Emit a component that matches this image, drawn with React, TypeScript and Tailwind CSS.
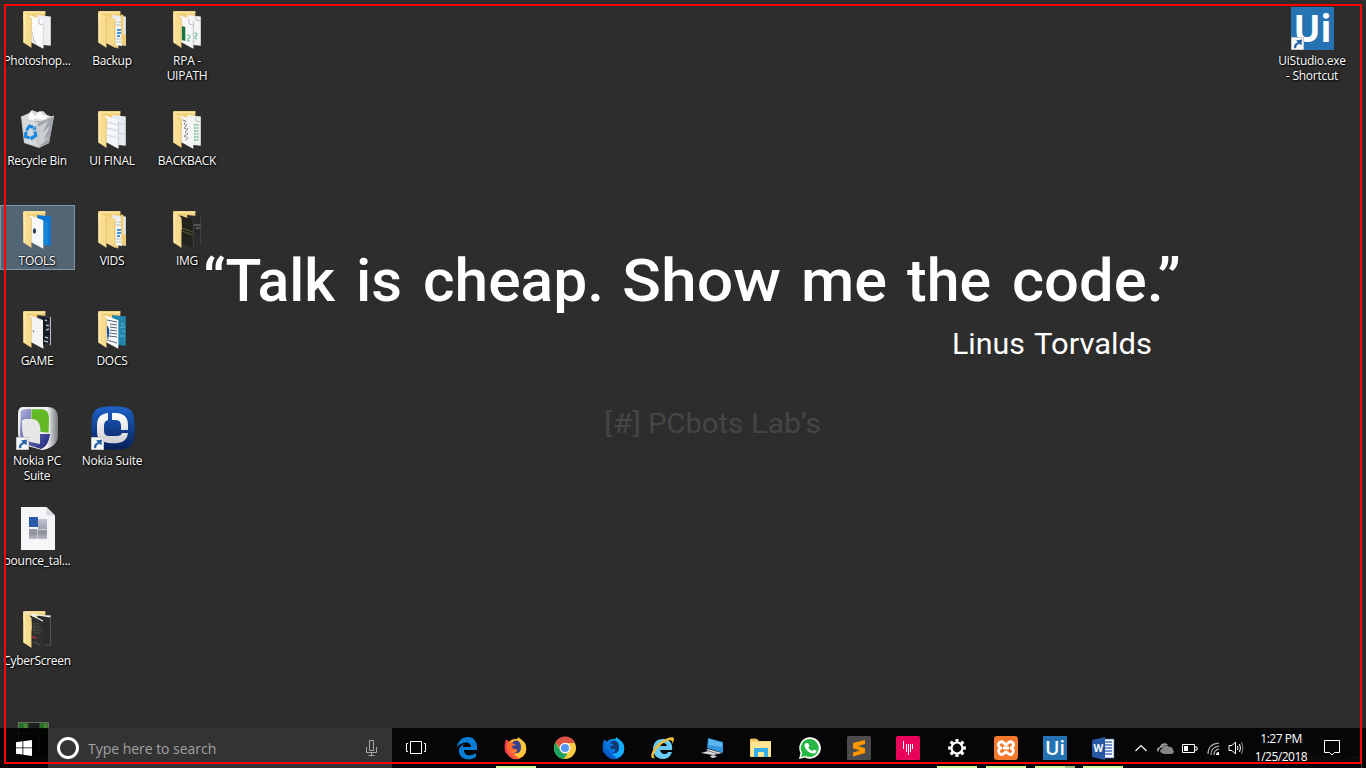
import React from "react";

type FolderKind = "plain" | "stack" | "sheets" | "forms" | "list" | "tools" | "dark" | "game" | "docs" | "cyber";

const sheetColors: Record<FolderKind, [string, string]> = {
  plain: ["#fafafa", "#eceef1"],
  stack: ["#f2d27d", "#e9edf2"],
  sheets: ["#f8f8f8", "#f1f3f2"],
  forms: ["#f4f6f9", "#e6ebf2"],
  list: ["#f5f5f3", "#eff3f0"],
  tools: ["#f6f8fa", "#0a78d2"],
  dark: ["#22231e", "#292a2c"],
  game: ["#f3f4f3", "#343842"],
  docs: ["#fafafa", "#2386ac"],
  cyber: ["#303030", "#2b2b2b"],
};

function FolderDetail({ kind }: { kind: FolderKind }) {
  switch (kind) {
    case "plain":
      return (
        <g fill="none" strokeWidth=".6">
          <path d="M17 9v5l4 1M10 22l2 9M11 29l3 5" stroke="#9aa0a6" />
          <path d="M21.3 11v27" stroke="#c4c7cb" />
        </g>
      );
    case "stack":
      return (
        <g>
          <path d="M18 8l7 1v27l-7-1z" fill="#f4f6f8" />
          <path d="M19 12h5M19 15h5M19 29h5M19 32h5" stroke="#a5b0bd" strokeWidth=".8" />
          <path d="M20 20h4M20 23h4M20 26h3" stroke="#3d93dd" strokeWidth="2" />
          <path d="M9 6l9.5 3v29L9 33z" fill="#f6d98b" />
          <path d="M17.8 9v28.5" stroke="#dcb964" strokeWidth=".6" />
          <path d="M23.5 4l3 1.3v19l2.3 1v10.5l-4.3-1z" fill="#efcd75" />
        </g>
      );
    case "sheets":
      return (
        <g>
          <path d="M9.8 16l3.5 1v14l-3.5-1z" fill="#137641" />
          <path d="M15 25c3 0 4 1 2 3s-2 3 1 3M22 23c3 0 4 1 2 3s-1 3 1 3" stroke="#76c29b" strokeWidth="1.2" fill="none" />
          <path d="M17 9v5l4 1M24 6v4l5 1M21.3 11v27" stroke="#aaa" strokeWidth=".7" fill="none" />
        </g>
      );
    case "forms":
      return <path d="M10 12l11 3M10 18l11 3M10 25l11 3M21 13l8 2M21 23l8 2M21.3 11v27" stroke="#c0c9d4" strokeWidth=".8" />;
    case "list":
      return (
        <g fill="none">
          <path d="M11 10l3 1-2 3 3 1-3 3 4 1-3 3 3 2-4 2 4 2-3 3" stroke="#686c6c" strokeWidth="1" strokeDasharray="2 .8" />
          <path d="M22 15h5M22 18h5M22 21h5M22 24h5M22 27h5M22 30h5" stroke="#7ec49a" strokeWidth="1.7" strokeDasharray="2 .5" />
          <path d="M24 7v4l5 1" stroke="#aaa" strokeWidth=".6" />
        </g>
      );
    case "tools":
      return (
        <g>
          <ellipse cx="12.5" cy="21" rx="1.6" ry="2.7" fill="#293e59" />
          <path d="M23 10l3 3v22h-5z" fill="#42a8e9" opacity=".25" />
        </g>
      );
    case "dark":
      return (
        <g fill="none">
          <path d="M10 18l11 4M10 21l11 4" stroke="#777135" strokeWidth=".7" />
          <path d="M22 15h7M24 18h4" stroke="#b0b0b0" strokeWidth=".9" strokeDasharray="1.5 .6" />
          <path d="M21.3 10v28M28.5 7v28" stroke="#51524d" strokeWidth=".6" />
        </g>
      );
    case "game":
      return (
        <g>
          <path d="M17 6l6 1 5 2-2 5 3 4-2 4 2 4-3 2 2 5-7 2V9z" fill="#171c25" />
          <path d="M23 10l2 1M24 15l3 1M23 27l3 1M24 20l3-1M22 31l4 1" stroke="#aebac5" strokeWidth="1.4" fill="none" />
          <path d="M28.5 7v28" stroke="#e4e6e8" strokeWidth=".8" />
          <path d="M10.5 20l2 1-1 2z" fill="#6d896f" />
        </g>
      );
    case "docs":
      return (
        <g fill="none">
          <path d="M10 10l10 2M13 14l7 1M13 17l7 1M13 20l7 1M13 23l7 1M12 26l8 1M10 30l10 3" stroke="#516178" strokeWidth="1" />
          <path d="M9.5 15c3 2 4 9 1 15z" fill="#174d9a" />
          <path d="M24 14h3M23 17h5M25 21h3M23 26h5" stroke="#87cde0" strokeWidth=".7" />
        </g>
      );
    case "cyber":
      return (
        <g fill="none">
          <path d="M3 2l18 9M10 5l19 1M10 4l18 3" stroke="#edf1ec" strokeWidth="1.1" />
          <path d="M11 14h6M11 17h7M11 20h9M12 23h6" stroke="#55624e" strokeWidth=".8" strokeDasharray="3 .6" />
          <path d="M10 27l5 1" stroke="#d7333c" strokeWidth="1.2" />
          <path d="M12 32l6 3M28.5 7v28h-6" stroke="#69706b" strokeWidth=".6" />
        </g>
      );
  }
}

function Folder({ kind }: { kind: FolderKind }) {
  const [front, back] = sheetColors[kind];
  return (
    <svg className="mr-[1.5px]" width="30" height="40" viewBox="0 0 30 40">
      <path d="M1.3 1.3h22v10h-22z" fill="#f0cf78" />
      <path d="M1.3 1.3h22v2H4z" fill="#ffe6a0" />
      <path d="M15 5l13.8 1.4v29.3l-9.8-1z" fill={back} />
      <path d="M7.8 5.2l13.5 5.1v28.4l-12.5-6.6z" fill={front} />
      <FolderDetail kind={kind} />
      <path d="M1.3 1.4l7.9 6.2c.2 4 1.2 8 .5 12-.8 2-.4 6-.4 18.2l-8-5.4z" fill="#f8dc90" />
      <path d="M1.6 2v30.5l1.7 1V3.5z" fill="#ffe9ac" />
      <path d="M9.2 8v29.5" stroke="#d9b45d" strokeWidth=".6" fill="none" />
    </svg>
  );
}

function Shortcut({ children }: { children: React.ReactNode }) {
  return (
    <div className="relative">
      {children}
      <svg className="absolute bottom-0 left-0" width="13" height="13" viewBox="0 0 13 13">
        <path d="M.5.5h12v12H.5z" fill="#f6f7f8" stroke="#c5c9cc" />
        <path d="M3 11.2C2.8 7.8 4 6 6.7 5.4L5 3.5l6-1-.6 6-2-1.8C6.5 7.3 5 8.5 5.2 11z" fill="#2864a4" />
      </svg>
    </div>
  );
}

function RecycleBin() {
  return (
    <svg className="mr-[2px]" width="36" height="41" viewBox="0 0 36 41">
      <path d="M1.5 8L10 4l3-3 5 2 6-1 4 4 6 2-3 4H6z" fill="#d4d8da" />
      <path d="M9 8l3-6 4 5 5-5 3 4 5 1-4 4-8-1-5 2z" fill="#fbfbfb" />
      <path d="M2 8l17 5 16-6-5 27-10 5-15-5z" fill="#c9cdd1" />
      <path d="M19 13l16-6-5 27-10 5z" fill="#9fa5aa" />
      <path d="M3 10l15 4-5 9 5 14-12-4zM19 18l10-6-5 11 7-6-6 13 5-2-10 10z" fill="#dde0e2" opacity=".7" />
      <path d="M2 8l17 5 16-6" fill="none" stroke="#eceeef" strokeWidth=".7" />
      <g fill="none" stroke="#1687dd" strokeWidth="3">
        <path d="M7.5 21.5l3-4.5 4 1.5" />
        <path d="M16 22.5l.8 4-4 2.8" />
        <path d="M10.5 29l-4-1.5.3-3.5" />
      </g>
      <path d="M13.5 21.5l3.7-1-.5-4zM13.5 32l-3-3 3-3zM4.5 24.5l2.5-2.5 2.5 2.5z" fill="#1687dd" />
    </svg>
  );
}

function NokiaPc() {
  return (
    <svg width="43" height="44" viewBox="0 0 43 44">
      <defs>
        <linearGradient id="silverEdge"><stop stopColor="#eeeeef" /><stop offset=".72" stopColor="#f4f4f5" /><stop offset="1" stopColor="#777b7f" /></linearGradient>
        <linearGradient id="violetFace" x2="1" y2="1"><stop stopColor="#aeb1dc" /><stop offset=".5" stopColor="#6264ac" /><stop offset="1" stopColor="#1d267b" /></linearGradient>
      </defs>
      <path d="M7 1h24c8 0 11 4 11 12v17c0 8-8 13-16 14L8 39C3 36 2 31 2 25V9c0-5 1-8 5-8z" fill="url(#silverEdge)" />
      <path d="M7 3h20c5 0 7 4 7 10v16c0 8-2 12-8 14L9 38c-4-3-5-7-5-13V9c0-4 1-6 3-6z" fill="#e8e9ed" />
      <path d="M5 5c3-2 6-2 10-2v10H9c-4 3-3 18 1 22l14 3v-10h10c-1 8-4 13-9 15L9 38C5 35 4 31 4 25z" fill="url(#violetFace)" />
      <path d="M15.5 3.3H26c6 1 7 5 7 10.5l-.4 13-8.2-1c.2-8-2.2-11-8.9-11z" fill="#63ba24" />
      <path d="M6 14l9-1c7 0 9 4 9 12v12l-11-2c-6-2-7-8-7-21z" fill="#e8e7e7" />
    </svg>
  );
}

function NokiaSuite() {
  return (
    <svg width="44" height="44" viewBox="0 0 44 44">
      <defs>
        <linearGradient id="suiteBlue" x2="0" y2="1"><stop stopColor="#1c62c7" /><stop offset=".55" stopColor="#123c8b" /><stop offset="1" stopColor="#081f58" /></linearGradient>
        <linearGradient id="suiteWhite" x2="0" y2="1"><stop stopColor="#fff" /><stop offset="1" stopColor="#cfcfd3" /></linearGradient>
      </defs>
      <path d="M12 1c6-1 14-1 20 0 7 1 10 4 11 11s1 14 0 21c-1 6-4 9-10 10-7 1-14 1-21 0C5 42 2 39 1 33c-1-7-1-14 0-21C2 5 5 2 12 1z" fill="url(#suiteBlue)" />
      <path d="M17 7v7q-4 1-4 6v5q0 5 5 5h8q4 0 5-3h6q-1 9-10 10-8 1-14-1Q6 34 6 26v-7Q6 8 17 7zM21 7h5q11 1 11 12v5h-7v-4q0-6-5-6h-4z" fill="url(#suiteWhite)" />
    </svg>
  );
}

function BounceFile() {
  return (
    <svg width="34" height="43" viewBox="0 0 34 43">
      <defs><linearGradient id="tileGray" x2="0" y2="1"><stop stopColor="#c2c4d2" /><stop offset=".7" stopColor="#8d8e9b" /><stop offset="1" stopColor="#bcbccb" /></linearGradient></defs>
      <path d="M0 0h25.5L34 8.5V43H0z" fill="#f6f6f9" />
      <path d="M25.5 0v8.5H34z" fill="#d8d8e1" />
      <path d="M8 10h9v10H8z" fill="#2a5aa8" />
      <path d="M17 12h9v10h-9zM8 22h8.5v10H8zM17 22.5h9V32h-9z" fill="url(#tileGray)" />
    </svg>
  );
}

function PixelThumbnail() {
  return (
    <svg width="32" height="35" viewBox="0 0 32 35">
      <path d="M0 0h31v35H0z" fill="#111c10" />
      <path d="M1 1h9v6H1zM22 1h8v6h-8z" fill="#287028" />
      <path d="M11 1h10v6H11z" fill="#1d201e" />
      <path d="M0 .5h31M.5 0v35M30.5 0v35" stroke="#666e67" />
      <path d="M10.5 1v33M21.5 1v33M1 11h29M1 22h29" stroke="#313c31" />
      <path d="M6 2h3v4H6zM26 2h3v4h-3z" fill="#568234" />
    </svg>
  );
}

function UiTile({ large = false }: { large?: boolean }) {
  return large ? (
    <svg className="overflow-visible" width="43" height="43" viewBox="0 0 43 43">
      <path d="M0 0h43v43H0z" fill="#2573b3" />
      <text x="2.4" y="34.5" fontFamily="Open Sans, sans-serif" fontSize="37" fontWeight="700" fill="white" textLength="38" lengthAdjust="spacingAndGlyphs">Ui</text>
    </svg>
  ) : (
    <svg className="overflow-visible" width="24" height="24" viewBox="0 0 24 24">
      <path d="M0 0h24v24H0z" fill="#2573b3" />
      <text x="2" y="19" fontFamily="Open Sans, sans-serif" fontSize="20" fontWeight="600" fill="white" textLength="20" lengthAdjust="spacingAndGlyphs">Ui</text>
    </svg>
  );
}

function DesktopItem({ icon, label, selected }: { icon?: React.ReactNode; label?: React.ReactNode; selected?: boolean }) {
  return (
    <div className="h-[100px] w-[75px] shrink-0">
      <div className={"flex h-[65px] w-[75px] flex-col items-center " + (selected ? "bg-[#536475] outline-1 -outline-offset-1 outline-[#8195a7]" : "")}>
        <div className="flex h-[48px] shrink-0 items-end justify-center pb-[3px]">{icon}</div>
        <div className="mr-px text-center font-['Open_Sans',sans-serif] text-[12px] leading-[15px] tracking-[-0.27px] whitespace-nowrap text-white [text-shadow:1px_1px_2px_#000,0_0_2px_#000]">{label}</div>
      </div>
    </div>
  );
}

const columns: { icon: React.ReactNode; label: React.ReactNode; selected?: boolean }[][] = [
  [
    { icon: <Folder kind="plain" />, label: "Photoshop..." },
    { icon: <RecycleBin />, label: "Recycle Bin" },
    { icon: <Folder kind="tools" />, label: "TOOLS", selected: true },
    { icon: <Folder kind="game" />, label: "GAME" },
    { icon: <Shortcut><NokiaPc /></Shortcut>, label: <>Nokia PC<br />Suite</> },
    { icon: <BounceFile />, label: "bounce_tal..." },
    { icon: <Folder kind="cyber" />, label: "CyberScreen" },
  ],
  [
    { icon: <Folder kind="stack" />, label: "Backup" },
    { icon: <Folder kind="forms" />, label: "UI FINAL" },
    { icon: <Folder kind="stack" />, label: "VIDS" },
    { icon: <Folder kind="docs" />, label: "DOCS" },
    { icon: <Shortcut><NokiaSuite /></Shortcut>, label: "Nokia Suite" },
  ],
  [
    { icon: <Folder kind="sheets" />, label: <>RPA -<br />UIPATH</> },
    { icon: <Folder kind="list" />, label: "BACKBACK" },
    { icon: <Folder kind="dark" />, label: "IMG" },
  ],
];

type Word = [string, number, number];
const quoteWords: Word[] = [["“Talk", 203, 132], ["is", 356, 46], ["cheap.", 423, 181], ["Show", 622, 159], ["me", 801, 86], ["the", 907, 84], ["code.”", 1012, 169]];
const authorWords: Word[] = [["Linus", 952, 73], ["Torvalds", 1034, 118]];
const labWords: Word[] = [["[#]", 604, 37], ["PCbots", 648, 95], ["Lab’s", 751, 70]];

function Wallpaper() {
  return (
    <svg className="absolute inset-0" width="1366" height="768" viewBox="0 0 1366 768" fontFamily="Roboto, sans-serif">
      <g fill="white" fontSize="60" fontWeight="500">
        {quoteWords.map(([t, x, w]) => <text key={t} x={x} y="301" textLength={w} lengthAdjust="spacingAndGlyphs">{t}</text>)}
      </g>
      <g fill="white" fontSize="29" fontWeight="400">
        {authorWords.map(([t, x, w]) => <text key={t} x={x} y="354" textLength={w} lengthAdjust="spacingAndGlyphs">{t}</text>)}
      </g>
      <g fill="#454545" fontSize="28" fontWeight="400">
        {labWords.map(([t, x, w]) => <text key={t} x={x} y="433" textLength={w} lengthAdjust="spacingAndGlyphs">{t}</text>)}
      </g>
    </svg>
  );
}

const Edge = () => (
  <svg width="22" height="24" viewBox="0 0 22 24"><path d="M1 11C2 5 6 1 12 1c6 0 9 5 9 10v3H8c0 7 8 6 12 3v4c-6 4-16 3-17-5-.5-4 2-7 6-8-3 2-2 3-2 3h8c0-6-9-6-14 0z" fill="#087ed7" /></svg>
);

function Firefox({ developer = false }: { developer?: boolean }) {
  const id = developer ? "foxBlue" : "foxRed";
  return (
    <svg width="24" height="24" viewBox="0 0 24 24">
      <defs>
        <linearGradient id={id} x1="1" y1="0" x2="0" y2="1"><stop stopColor={developer ? "#23d1fb" : "#fff153"} /><stop offset=".5" stopColor={developer ? "#0878ed" : "#ff9624"} /><stop offset="1" stopColor={developer ? "#0d42a7" : "#f51b5f"} /></linearGradient>
      </defs>
      <circle cx="12" cy="13" r="10.3" fill={`url(#${id})`} />
      <path d="M14 1l4 3 3 3c3 7 0 13-6 15l-5-4c6 0 7-4 5-8-2-3-2-6-1-9z" fill={developer ? "#15aeff" : "#ffc83c"} />
      <path d="M1 11L3 4l3 3 6-1-3 4 6-1-2 6-6-1z" fill={developer ? "#0878df" : "#ff6a2f"} />
      <path d="M8 7c4-5 9-2 9 4s-3 7-7 5c4 0 4-2 2-3H9L8 10l4-1z" fill={developer ? "#113b76" : "#3b418f"} />
      <path d="M3 4c-2 4-2 10 0 13" fill="none" stroke={developer ? "#0b61cf" : "#ff384f"} strokeWidth="2" />
    </svg>
  );
}

const Chrome = () => (
  <svg width="24" height="24" viewBox="0 0 24 24"><circle cx="12" cy="12" r="11" fill="#fbcc43" /><path d="M2.5 6.5C7-2 19-1 22 7H12c-3 0-5 3-4 6z" fill="#de5246" /><path d="M2.5 6.5L7.7 15c2 3 5 3 7 2l-4 6C2 22-1 13 2.5 6.5z" fill="#1da462" /><circle cx="12" cy="12" r="5.3" fill="white" /><circle cx="12" cy="12" r="4.1" fill="#5796f5" /></svg>
);

const Explorer = () => (
  <svg width="24" height="24" viewBox="0 0 24 24"><path d="M2 12C3 6 6 3 12 3c7 0 10 5 9 11H9c1 5 7 5 8 2h4c-2 5-5 7-9 7C6 23 2 19 2 12zm7-2h7c-1-4-6-4-7 0z" fill="#6bcbf5" /><path d="M4 22C-4 24 2 10 11 5c6-4 12-5 12-2 0 2-1 3-2 5 1-4-1-5-7-2C7 10 0 19 4 22z" fill="#ebbd3c" /></svg>
);

const Remote = () => (
  <svg width="24" height="24" viewBox="0 0 24 24"><path d="M8 2l15 4v11L7 12z" fill="#3293de" /><path d="M9 3l13 4v4L8.5 9z" fill="#5eb6ef" /><path d="M8 13l14 4-3 1L6 14zM1 17l7-2 10 3-5 1zM10 20l4-1 3 2-5 1z" fill="#d4d9de" /></svg>
);

const FileExplorer = () => (
  <svg width="24" height="24" viewBox="0 0 24 24"><path d="M1 3h7l2 2h12v16H1z" fill="#f5cf68" /><path d="M2 6h20v14H2z" fill="#ffe596" /><path d="M5 12h14v9h-4v-5H9v5H5z" fill="#35aeea" /><path d="M2 3h5" stroke="#d9a844" /></svg>
);

const Whatsapp = () => (
  <svg width="24" height="24" viewBox="0 0 24 24"><path d="M1 23l1.5-6A10.8 10.8 0 1 1 7 21.5z" fill="white" /><path d="M3 21l1.2-4A9 9 0 1 1 7.5 20z" fill="#29b843" /><path d="M8 7l2 0 1.5 3-1.2 1.5c1 1.9 2.3 2.8 4 3.6l1.4-1.7 2.8 1.4c0 5-10 3-12-5-.2-1 .4-2 1.5-2.8z" fill="white" /></svg>
);

const Sublime = () => (
  <svg width="24" height="24" viewBox="0 0 24 24"><rect width="24" height="24" rx="1.5" fill="#4b4b4b" /><path d="M6 7l12-3v4l-7 2 7 2.3V17L6 20.5v-4l7-2-7-2.2z" fill="#ff9800" /></svg>
);

const PinkBars = () => (
  <svg width="24" height="24" viewBox="0 0 24 24"><rect width="24" height="24" rx="1.5" fill="#e9035b" /><path d="M7.5 5v8M10.5 8v8M12.5 8v11M14.5 8v8M16.5 8v5" stroke="white" strokeWidth="1" /></svg>
);

const Settings = () => (
  <svg width="20" height="20" viewBox="-10 -10 20 20"><circle r="5.5" fill="none" stroke="white" strokeWidth="2.2" />{[0, 45, 90, 135, 180, 225, 270, 315].map(a => <path key={a} d="M-1.6-6.2v-2.7h3.2v2.7" transform={`rotate(${a})`} fill="white" />)}</svg>
);

const Xampp = () => (
  <svg width="24" height="24" viewBox="0 0 24 24"><rect width="24" height="24" rx="3" fill="#f3792e" /><path d="M5 7c3-3 5 0 7 2 2-2 4-5 7-2 2 3-1 4-2 5 2 1 4 3 1 6-2 2-4-1-6-2-2 1-4 4-6 2-3-3-1-5 1-6-2-1-4-3-2-5zM9 12h6" fill="none" stroke="white" strokeWidth="2.8" strokeLinejoin="round" /></svg>
);

const Word = () => (
  <svg width="24" height="24" viewBox="0 0 24 24"><path d="M11 3h12v19H11z" fill="#f4f7fb" stroke="#3564ac" strokeWidth=".6" /><path d="M13 6h8M13 9h8M13 12h8M13 15h8M13 18h8" stroke="#4a75b7" strokeWidth="1.3" /><path d="M1 4l13-3v23L1 21z" fill="#2757a2" /><text x="2.5" y="16" fontFamily="Open Sans, sans-serif" fontSize="10" fontWeight="700" fill="white">W</text></svg>
);

const taskApps: [React.ReactNode, string][] = [
  [<Edge />, ""], [<Firefox />, "bg-[#d4f9a5]"], [<Chrome />, ""], [<Firefox developer />, ""],
  [<Explorer />, ""], [<Remote />, ""], [<FileExplorer />, ""], [<Whatsapp />, ""],
  [<Sublime />, ""], [<PinkBars />, ""], [<Settings />, "bg-[#d4f9a5]"], [<Xampp />, "bg-[#d4f9a5]"],
  [<UiTile />, "bg-linear-to-r from-[#d4f9a5] from-75% to-[#a3c17f] to-75%"], [<Word />, "bg-[#d4f9a5]"],
];

function Tray() {
  return (
    <div className="flex h-full flex-1 items-center text-white">
      <svg className="ml-[6.5px] shrink-0" width="14" height="14" viewBox="0 0 14 14"><path d="M1.5 10L7 4.5l5.5 5.5" fill="none" stroke="white" strokeWidth="1.2" /></svg>
      <svg className="ml-[8px] shrink-0" width="18" height="14" viewBox="0 0 18 14"><path d="M2 11c-2-2-1-5 2-5 0-4 6-5 8-2h-3C6 5 7 7 4 7z" fill="#9b9b9b" /><path d="M6 12c-3-1-2-4 0-4 0-4 5-5 7-2 3-1 4 2 4 3 2 2 0 4-2 4H8z" fill="#858585" /></svg>
      <svg className="ml-[8px] shrink-0" width="16" height="12" viewBox="0 0 16 12"><path d="M.5 2.5h12v8H.5zM13 5h2v3h-2" fill="none" stroke="white" /><path d="M2 4h4v5H2z" fill="white" /></svg>
      <svg className="ml-[9px] shrink-0" width="14" height="15" viewBox="0 0 14 15"><g fill="none" stroke="#bdbdbd" strokeWidth="1.1"><path d="M1 13Q1 3 12 2M4 14Q4 6 12 5M7 14Q7 9 12 8" /></g><path d="M9 14q0-3 3-3v3z" fill="white" /></svg>
      <svg className="ml-[7px] shrink-0" width="17" height="16" viewBox="0 0 17 16"><path d="M1 5.5h3L7.5 2v12L4 10.5H1z" fill="none" stroke="white" /><path d="M9.5 6q1 2 0 4M11.5 4q2 4 0 8" fill="none" stroke="white" /><path d="M13.5 2q3 6 0 12" fill="none" stroke="#888" /></svg>
      <div className="ml-[6px] flex w-[60px] shrink-0 flex-col text-center font-['Open_Sans',sans-serif] text-[12px] leading-[18px] tracking-[-0.5px] whitespace-nowrap"><span>1:27 PM</span><span>1/25/2018</span></div>
      <svg className="ml-[12px] shrink-0" width="18" height="18" viewBox="0 0 18 18"><path d="M1.5 1.5h15v12h-5L9 16l-2.5-2.5h-5z" fill="none" stroke="white" /></svg>
    </div>
  );
}

export default function App() {
  return (
    <main className="relative flex h-[768px] w-[1366px] flex-col overflow-hidden bg-[#2d2d2d]">
      <Wallpaper />
      <section className="relative flex h-[728px] shrink-0 justify-between pt-[5px]">
        <div className="flex">
          {columns.map((items, i) => (
            <div className="flex flex-col" key={i}>
              {items.map((item, j) => <DesktopItem key={j} {...item} />)}
              {i === 0 && <div className="mt-[17px] ml-[18px] shrink-0"><PixelThumbnail /></div>}
            </div>
          ))}
        </div>
        <div className="mr-[16px]"><DesktopItem icon={<Shortcut><UiTile large /></Shortcut>} label={<>UiStudio.exe<br />- Shortcut</>} /></div>
      </section>
      <footer className="relative flex h-10 shrink-0 bg-black/85">
        <div className="flex w-12 items-center justify-center">
          <svg width="16" height="16" viewBox="0 0 16 16"><path d="M0 2.3L6.5 1.3v6.2H0zM7.3 1.2L16 0v7.5H7.3zM0 8.3h6.5v6.3L0 13.7zM7.3 8.3H16V16l-8.7-1.2z" fill="white" /></svg>
        </div>
        <div className="flex w-[344px] items-center bg-[#333333] pr-[13px] pl-[9px]">
          <div className="h-[22px] w-[22px] rounded-full border-[3px] border-white" />
          <span className="ml-[9px] flex-1 font-['Open_Sans',sans-serif] text-[14px] tracking-[-0.03px] text-[#a1a1a1]">Type here to search</span>
          <svg width="15" height="18" viewBox="0 0 15 18"><path d="M5.5 1.5h4v10h-4zM2.5 8v5.5h10V8M7.5 13.5v3M4.5 16.5h6" fill="none" stroke="#a7a7a7" /></svg>
        </div>
        <div className="flex w-[50.5px] shrink-0 items-center pl-[13px]">
          <svg width="22" height="16" viewBox="0 0 22 16"><path d="M5.5 1.5h11v12h-11zM3 3.5H1.5v8H3M19 3.5h1.5v8H19" fill="none" stroke="white" /></svg>
        </div>
        <nav className="flex w-[685px] shrink-0">
          {taskApps.map(([icon, bar], i) => (
            <div key={i} className={"flex shrink-0 flex-col items-center " + (i === 12 ? "w-[48px]" : "w-[49px]")}>
              <div className="flex h-[38px] items-center pt-[2px]">{icon}</div>
              <div className={"h-[2px] w-10 " + bar} />
            </div>
          ))}
        </nav>
        <Tray />
        <span className="absolute right-[5px] bottom-[3px] font-['Liberation_Sans',sans-serif] text-[9px] text-[#151515]">blogspot.com</span>
        <div className="absolute top-0 right-[4px] h-10 w-px bg-[#444444]" />
      </footer>
      <div className="pointer-events-none absolute top-[4px] left-[4px] h-[760px] w-[1358px] border-2 border-[#ff0000]" />
    </main>
  );
}
